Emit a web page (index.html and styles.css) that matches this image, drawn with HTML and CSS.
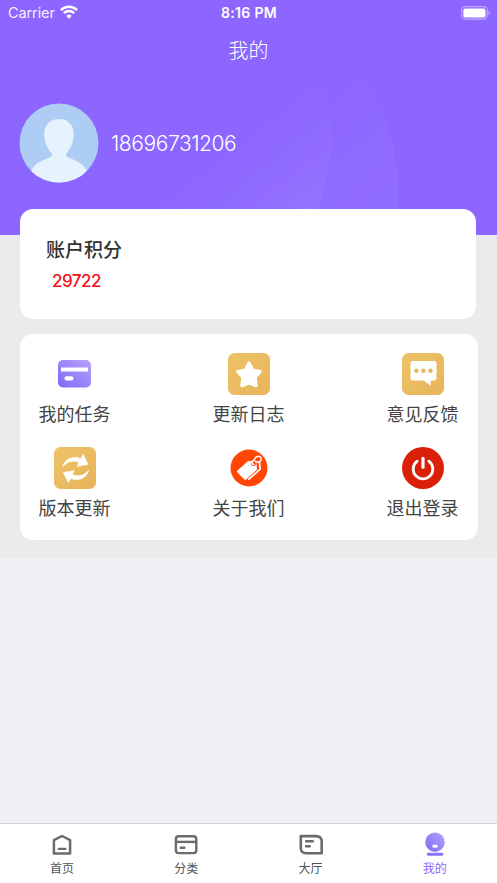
FILE: index.html
```html
<!DOCTYPE html>
<html lang="zh-CN">
<head>
<meta charset="utf-8">
<title>我的</title>
<link rel="stylesheet" href="styles.css">
</head>
<body>
<div class="app">
  <header class="hero">
    <svg class="hero-art" viewBox="0 0 497 235" aria-hidden="true">
      <defs>
        <linearGradient id="arcA" gradientUnits="userSpaceOnUse" x1="245" y1="125" x2="315" y2="215"><stop offset="0" stop-color="#fff" stop-opacity="0"/><stop offset="1" stop-color="#fff" stop-opacity=".05"/></linearGradient>
        <linearGradient id="arcB" gradientUnits="userSpaceOnUse" x1="305" y1="110" x2="375" y2="190"><stop offset="0" stop-color="#fff" stop-opacity="0"/><stop offset="1" stop-color="#fff" stop-opacity=".045"/></linearGradient>
      </defs>
      <circle cx="154" cy="200" r="245" fill="url(#arcB)"/>
      <circle cx="121" cy="137" r="210" fill="url(#arcA)"/>
    </svg>
    <div class="status">
      <div class="carrier"><span>Carrier</span>
        <svg width="18" height="14" viewBox="0 0 18 14"><g fill="none" stroke="#fff" stroke-width="2.5"><path d="M.9 5.1a11.5 11.5 0 0 1 16.2 0"/><path d="M3.9 8.2a7.2 7.2 0 0 1 10.2 0"/></g><path d="M9 13.7l-2.7-2.8a3.9 3.9 0 0 1 5.4 0z" fill="#fff"/></svg>
      </div>
      <span class="time">8:16 PM</span>
      <svg class="battery" width="30" height="14" viewBox="0 0 30 14"><rect x=".6" y=".6" width="25.6" height="12.5" rx="3.6" fill="none" stroke="#fff" stroke-opacity=".45" stroke-width="1.1"/><rect x="2.3" y="2.4" width="22.2" height="9" rx="2" fill="#fff"/><path d="M27.7 4.8c1.7.7 1.7 3.5 0 4.2z" fill="#fff" fill-opacity=".5"/></svg>
    </div>
    <h1 class="title">我的</h1>
    <div class="profile">
      <svg class="avatar" width="80" height="80" viewBox="0 0 80 80"><defs><clipPath id="face"><circle cx="40" cy="40" r="39.5"/></clipPath></defs><circle cx="40" cy="40" r="39.5" fill="#aecdf4"/><path clip-path="url(#face)" fill="#e7f2ff" d="M40 16c9 0 14.7 6 14.7 15 0 8-3 14.500-6.800 18.500-1.700 2 -.8 4 1.500 5.100C57 58 67 61 67.500 69L60 80H20l-7.500-11C13 61 23 58 30.600 54.600c2.300-1.100 3.200-3.100 1.500-5.100C28.300 45.500 25.300 39 25.300 31c0-9 5.700-15 14.700-15z"/></svg>
      <span class="phone">18696731206</span>
    </div>
  </header>
  <main class="content">
    <section class="card points">
      <h2>账户积分</h2>
      <p>29722</p>
    </section>
    <section class="card menu">
      <div class="item">
        <svg viewBox="0 0 42 42"><defs><linearGradient id="violet" x1="0" y1="1" x2="1" y2="0"><stop stop-color="#8068f7"/><stop offset="1" stop-color="#b7a4fc"/></linearGradient></defs><rect x="4" y="7" width="33" height="27.500" rx="5" fill="url(#violet)"/><path d="M7 14.500h27v4H7z" fill="#fff"/><rect x="10.500" y="23.300" width="9" height="4.200" rx="2.100" fill="#fff"/></svg>
        <span>我的任务</span>
      </div>
      <div class="item">
        <svg viewBox="0 0 42 42"><defs><linearGradient id="gold" x1="0" y1="0" x2="1" y2="1"><stop stop-color="#edc368"/><stop offset="1" stop-color="#e8b45a"/></linearGradient></defs><rect width="42" height="42" rx="6.500" fill="url(#gold)"/><path d="M21 10.200l3.500 7 7.400 1.500-5 5.700 1 8.100L21 29.600l-6.900 2.900 1-8.100-5-5.700 7.400-1.500z" fill="#fff" stroke="#fff" stroke-width="3.600" stroke-linejoin="round"/></svg>
        <span>更新日志</span>
      </div>
      <div class="item">
        <svg viewBox="0 0 42 42"><rect width="42" height="42" rx="6.500" fill="url(#gold)"/><path d="M11 8h21q2.500 0 2.500 2.500v14.500q0 2.500-2.500 2.500h-3.300v5.200L21.500 27.500H11q-2.500 0-2.500-2.500V10.500Q8.500 8 11 8z" fill="#fff"/><g fill="#e9b95c"><circle cx="14.300" cy="17.700" r="2.200"/><circle cx="21.400" cy="17.700" r="2.200"/><circle cx="28.500" cy="17.700" r="2.200"/></g></svg>
        <span>意见反馈</span>
      </div>
      <div class="item">
        <svg viewBox="0 0 42 42"><rect width="42" height="42" rx="6.500" fill="url(#gold)"/><g fill="#fff" stroke="#fff" stroke-width=".7" stroke-linejoin="round"><path d="M8.900 19.500C10.400 12.500 18.500 8.300 26.700 11.500L29.200 7.600 34 17.400 23.200 19.300 25.200 15.500C19.400 12.800 13.200 14.300 8.900 19.500z"/><path transform="rotate(180 21.700 21.500)" d="M8.900 19.500C10.400 12.500 18.500 8.300 26.700 11.500L29.200 7.600 34 17.400 23.200 19.300 25.200 15.500C19.400 12.800 13.200 14.300 8.900 19.500z"/></g></svg>
        <span>版本更新</span>
      </div>
      <div class="item">
        <svg viewBox="0 0 42 42"><circle cx="21" cy="21" r="18.500" fill="#ff4603"/><g transform="translate(2 0)"><path d="M7.300 23.700L17.800 14.300l8.100-.9 1.300 9-11.300 10.300q-.8.700-1.500-.1L7.100 24.900q-.6-.6.200-1.200z" fill="#fff"/><path d="M18.300 32.600l11.400-10q.6-.5.500-1.300l-.9-6.900" fill="none" stroke="#fff" stroke-width="1.700"/><circle cx="23.500" cy="16.500" r="2.500" fill="#ff4603"/><path d="M23.800 17.200c-2.200.5-2.600-2.400-.5-3.400 1.500-.7 1.200-3.700 4-4.400 3.100-.7 4.800 2 3.500 4.200-1.200 2-3.300 1.600-4.800 1.200" fill="none" stroke="#fff" stroke-width="1.500" stroke-linecap="round"/></g></svg>
        <span>关于我们</span>
      </div>
      <div class="item">
        <svg viewBox="0 0 42 42"><circle cx="21" cy="21" r="21" fill="#db2009"/><path d="M15.200 14.200a9.800 9.800 0 1 0 11.600 0" fill="none" stroke="#fff" stroke-width="2.800" stroke-linecap="round"/><path d="M21 11.400v8.800" stroke="#fff" stroke-width="3.200" stroke-linecap="round"/></svg>
        <span>退出登录</span>
      </div>
    </section>
  </main>
  <nav class="tabs">
    <a class="tab"><svg viewBox="0 0 28 26"><path d="M5.900 8.100L14 4l8.100 4.100v13.300H5.900z" fill="none" stroke="#6b6b6b" stroke-width="2.500" stroke-linejoin="round"/><path d="M10.800 16.900h6.500" stroke="#6b6b6b" stroke-width="2.300" stroke-linecap="round"/></svg><span>首页</span></a>
    <a class="tab"><svg viewBox="0 0 28 26"><g fill="none" stroke="#6b6b6b" stroke-width="2.400"><rect x="3.900" y="4.300" width="20.400" height="16.800" rx="2.800"/><path d="M4 9.900h20"/><path d="M8.800 15.700h3.600" stroke-linecap="round"/></g></svg><span>分类</span></a>
    <a class="tab"><svg viewBox="0 0 28 26"><g fill="none" stroke="#6b6b6b" stroke-width="2.600" stroke-linecap="round" stroke-linejoin="round"><path d="M3.800 4.100h15q5.900 0 5.900 5.500v11.700H9.300q-5.500 0-5.500-5.500z"/><path d="M9.200 9.300h6.500M9.200 14.200h3.500"/></g></svg><span>大厅</span></a>
    <a class="tab active"><svg viewBox="0 0 28 26"><circle cx="14" cy="10.200" r="9.700" fill="url(#violet)"/><rect x="11.400" y="12.800" width="5.300" height="2.900" rx="1.400" fill="#fff"/><rect x="5.800" y="20.800" width="16.500" height="2.900" rx="1.400" fill="#8a70fa"/></svg><span>我的</span></a>
  </nav>
</div>
</body>
</html>
```
FILE: styles.css
```css
* { box-sizing: border-box; }
body {
  margin: 0;
  background: #efeff4;
  font-family: "Noto Sans CJK SC", sans-serif;
  color: #444;
}
h1, h2, p { margin: 0; font-weight: 400; }
svg { display: block; }
.app { height: 883px; display: flex; flex-direction: column; overflow: hidden; }

.hero { position: relative; flex: none; height: 235px; background: #8c66ff; color: #fff; }
.hero-art { position: absolute; inset: 0; width: 100%; height: 100%; }
.status {
  position: relative;
  display: grid;
  grid-template-columns: 1fr auto 1fr;
  height: 26px;
  padding: 0 6px 0 8px;
  align-items: center;
  font: 14.5px/26px Inter, sans-serif;
}
.carrier { display: flex; align-items: center; gap: 5px; }
.carrier span { color: #f3eeff; letter-spacing: -.1px; }
.carrier svg { margin-top: -2px; }
.time { font-weight: 600; font-size: 14px; letter-spacing: .3px; margin-left: -1px; }
.battery { justify-self: end; margin-top: -1px; }
.title { position: relative; height: 48px; line-height: 48px; text-align: center; font-size: 20px; font-weight: 300; }
.profile { position: relative; display: flex; align-items: center; gap: 12px; padding: 29px 19px 0; }
.phone { font: 300 21px/30px Inter, sans-serif; letter-spacing: -.42px; padding-top: 2px; }

.content { flex: none; height: 323px; background: #ebebeb; padding: 0 19.500px 0 19.500px; }
.card { background: #fff; border-radius: 13px; }
.points { position: relative; margin-top: -26px; height: 110px; margin-right: 1.500px; padding: 23px 26.500px; }
.points h2 { font-size: 19px; line-height: 34px; font-weight: 500; color: #333; }
.points p { padding-left: 6px; font: 500 17px/30px Inter, sans-serif; letter-spacing: -.5px; color: #f5101c; }
.menu {
  margin-top: 15px;
  height: 206px;
  padding: 19px 18px 0;
  display: grid;
  grid-template-columns: repeat(3, 74px);
  grid-auto-rows: 93.500px;
  justify-content: space-between;
  align-content: start;
}
.item { display: flex; flex-direction: column; align-items: center; font-size: 18px; line-height: 36px; white-space: nowrap; }
.item svg { width: 42px; height: 42px; }

.tabs { flex: none; margin-top: auto; height: 60px; display: grid; grid-template-columns: repeat(4, 1fr); background: #fff; border-top: 1px solid #cfcfd4; }
.tab { display: flex; flex-direction: column; align-items: center; padding-top: 8px; font-size: 12px; line-height: 20px; color: #555; }
.tab svg { width: 28px; height: 26px; }
.active { color: #8c66ff; }
```
